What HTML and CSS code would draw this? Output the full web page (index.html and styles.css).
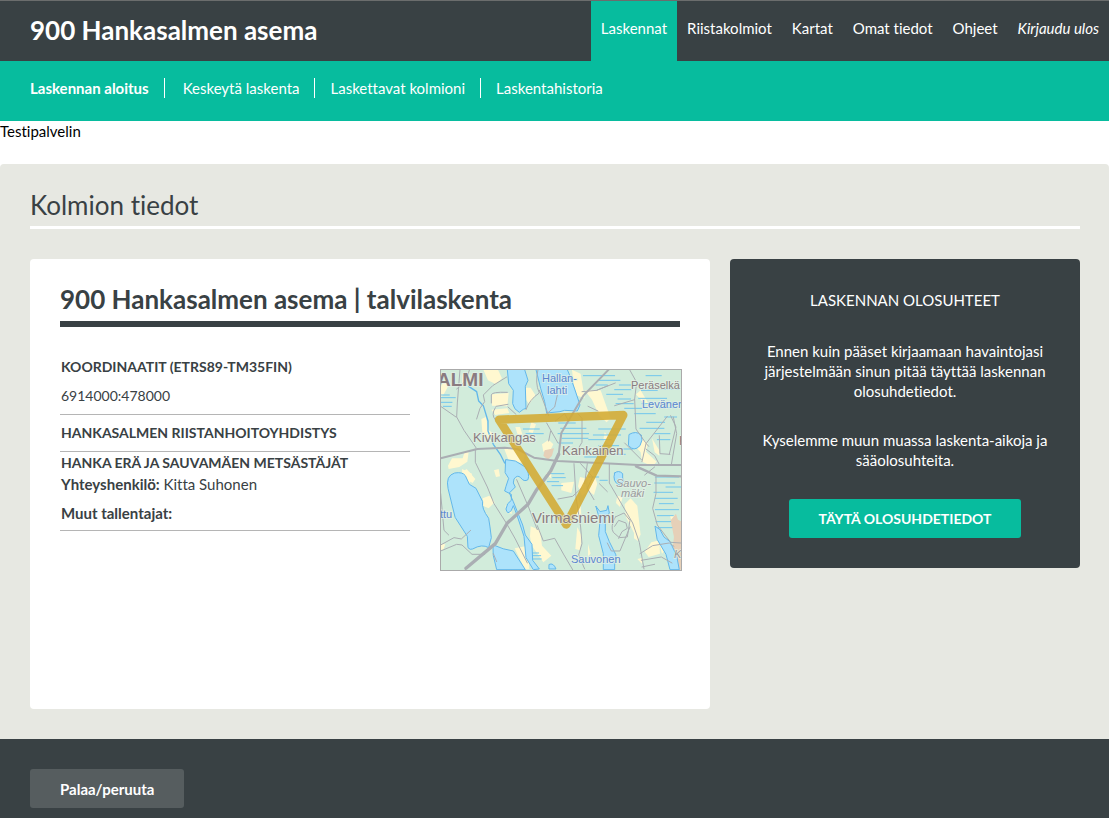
FILE: index.html
```html
<!DOCTYPE html>
<html lang="fi">
<head>
<meta charset="utf-8">
<meta name="viewport" content="width=device-width, initial-scale=1">
<title>Kolmion tiedot</title>
<link rel="stylesheet" href="styles.css">
</head>
<body>
<header class="topbar">
  <h1 class="site-title">900 Hankasalmen asema</h1>
  <nav class="main-nav" aria-label="Päävalikko">
    <a class="active" href="#">Laskennat</a>
    <a href="#">Riistakolmiot</a>
    <a href="#">Kartat</a>
    <a href="#">Omat tiedot</a>
    <a href="#">Ohjeet</a>
    <a class="logout" href="#">Kirjaudu ulos</a>
  </nav>
</header>
<nav class="sub-nav" aria-label="Laskennat">
  <a class="current" href="#">Laskennan aloitus</a>
  <a href="#">Keskeytä laskenta</a>
  <a href="#">Laskettavat kolmioni</a>
  <a href="#">Laskentahistoria</a>
</nav>
<p class="notice">Testipalvelin</p>
<main class="content">
  <h2 class="page-title">Kolmion tiedot</h2>
  <div class="columns">
    <section class="card">
      <h3 class="card-title">900 Hankasalmen asema | talvilaskenta</h3>
      <div class="card-body">
        <div class="info">
          <div class="info-row coordinates">
            <h4>KOORDINAATIT (ETRS89-TM35FIN)</h4>
            <p>6914000:478000</p>
          </div>
          <div class="info-row association">
            <h4>HANKASALMEN RIISTANHOITOYHDISTYS</h4>
          </div>
          <div class="info-row club">
            <h4>HANKA ERÄ JA SAUVAMÄEN METSÄSTÄJÄT</h4>
            <p><strong>Yhteyshenkilö:</strong> Kitta Suhonen</p>
            <p class="recorders"><strong>Muut tallentajat:</strong></p>
          </div>
        </div>
        <svg class="map" viewBox="0 0 242 202" role="img" aria-label="Kartta laskentakolmiosta">
          <rect width="242" height="202" fill="#d2ecdb"/>
          <g transform="scale(.3333) translate(-6 -6)" fill="none" stroke-linecap="round" stroke-linejoin="round">
            <g fill="#fff8d0">
              <path d="M136 8h44l12 26-18 18-24-12zM162 82l50-4-4 40-46-2zM160 128l48-4 6 14-42 6zM262 62l16 0 14 22-18 28-10-14zM240 94l22 4-2 22-16-2zM74 20l22 6-24 34zM8 52l16-12 10 12-18 32-8 6z"/>
              <path d="M30 296l12-22 32 0 6-20 12 2-4 28-24 16-32 6zM74 314l12-8 26 30-8 12-26-14zM168 310l14-4 4 22-12 2zM312 232l20-14 14 14-8 16-22 6zM198 244l34-6 30 22-8 28-42-8zM130 156l14-6 8 40 22 14-10 22-30-16zM280 166l14 6-10 26-12-4zM232 180l14 0 8 24-16-4z"/>
              <path d="M402 8l26 12 12 74-22-8-10-28zM440 70l48 0 30 84-12 12-22-20-22-48zM500 196l24 24-8 14-20-16zM590 236l22-22 18 16-6 24 32 30-12 14-32-14-4-28zM594 82l14-12 26 44-14-2zM642 214l22 36 0 16-14-10zM426 330l16 4 4 42-14 10-12-28zM446 330l18-20 14 40-10 34-14-10z"/>
              <path d="M72 306l30 14-6 28-22-16zM134 394l20-8 16 20-18 18-18-8zM202 416l12-6 8 30-14-2zM278 478l28 12 6 46 28 30-24 20-36-52-4-26zM230 544l40-8 4 70h-14zM8 530l14 2-6 16H8zM324 320l20-14-6 28zM370 348l38-4-8 34-30-8z"/>
              <path d="M418 380l10 36 2 28-8 20-8-30zM418 480l14 28-6 42-14-4zM450 530l8 30-8 8zM560 412l18-18 20 22 10 88-12 10-32-64zM588 496l20 4-8 22-12-8zM620 554l20-28 24-6 2 40-34 10zM664 530l14-8 10 22-16 16zM696 446l20 0 0 18-16-4zM538 386l16 4-8 30-12-12zM598 576l16-4-2 18z"/>
            </g>
            <path fill="#e6d0b8" d="M320 250l28-6-6 22-12 12-14-12zM698 460l16-20 6 18 12 6v144h-10l-18-66 4-32z"/>
            <path stroke="#70c6ee" stroke-width="3" d="M10 92h42M8 106h34M16 118h24M10 84h24M436 26h94M484 40h62M474 54h34M544 54h34M530 68h50M506 82h48M540 96h38M560 124h52M534 110h52M624 26h46M610 70h48M670 66h54M602 94h84M612 110h36M680 108h36M664 122h50M590 140h62M680 150h36M626 166h54M606 184h72M650 200h46M658 218h38M362 168h50M368 184h76M360 200h92M372 214h78M362 228h42M482 186h80M466 204h82M452 218h68M482 236h60M440 270h60M544 246h40M516 262h46M256 186h48M264 200h52M334 320h44M344 332h38M328 344h34M342 356h32M652 330h70M650 348h60M684 360h44M648 376h56M652 394h66M664 410h42M652 428h70M658 446h48M654 464h44M660 482h42M486 340h22M452 330h30M278 566h30M286 576h24M282 558h20"/>
            <g fill="#ade3fb" stroke="#62b7ea" stroke-width="3">
              <path d="M208 8l4 42 14 20-2 40q4 18 20 26 14-12 20-12l-2-66 8-18-10-32zM294 8l14 56 12 40 6 34 40-4 14-4 38 2 8-18-16-48-12-34-10-24zM574 202q20-12 36 2 6 14-4 32-18 20-34 0z"/>
              <path d="M30 364q-8-38 20-46 24-4 32 8l12 26 20 12 20 40q-4 20 18 50l4 26 4 32-8 30q-20-12-48 4-8 4-14-4l-2-34-36-56zM166 534q30 14 60 18l36 56h-86l-10-42z"/>
              <path d="M204 278l28 4 30 18q14 20 8 38-12 8-22-6-10-10-20 4-6 12 4 24l-18 18 12 26 12 30 16 40 8 30 20 28 2 48 20 26-18 2-22-36-6-64-22-66-10-26-6 14q-12 16-16-4 2-18 16-26l0-18-20-10 4-14 8-24-10-16z"/>
              <path d="M474 418l12 16 20-4 4-14 4 22-12 16 0 40 12 30 20 40-4 30 0 14h-34l0-48-14-54 4-44zM530 318q12-10 24 2-2 16 4 22l-14 12q-22-10-14-36zM652 478l14 10 12 22 18 14 20 42 8 42h-28l-12-46-26-44zM334 592q12-6 20 14h-20z"/>
              <path fill="none" stroke-width="4" d="M92 58l24 16 6 28 14 14 14 46 0 30 16 40 22 32 12 24"/>
            </g>
            <g stroke="#aaaeb3" stroke-width="3">
              <path d="M66 8l-8 100-2 42 22 40 36 52M8 118l46 32M56 66q30-20 38-56M116 156l10-32 14-20-4-20 28-28 42-26M160 108V84q0-10 48-8M172 122q-14 22 0 36M174 118l36-6M210 120l24 22M300 8q-10 40 4 70-30 20-40 50M304 70l28 76M322 144l28-24 8-36M326 168l34 60M338 192l-6 30"/>
              <path d="M432 74l44-4 56-22M476 70l34-14M576 10l20 36-6 50 4 90 28 40 10 12M530 116l60-18M352 162l28-22 12 22M420 140l12 14 0 72-12 20M450 118l30 14M560 228l50 50M688 148l-64 82-12 54M698 146l16 34-20 82M664 206l2 54 30 2M706 150l10 50-16 94M624 246l26 20 16 30"/>
              <path d="M112 246l0 40 36 74 20 50 38 60 26 46 36 72M8 534l40-22 22 4 28-26M8 552l48-20 16 2 30 28 38 0M8 380l10 110 14 14M166 560l10 24M236 338l34 78 28 72M408 290l6 100 14 90 4 50-10 34 18 42M360 396l44-8 26-24M428 290l36 40-16 34 20 34M448 290l-8 60M514 292l0 56 70 120 20 58 14 80"/>
              <path d="M298 476l18 46 34-8 28 50 26 44M654 330l0 50-10 44 14 50 40 52 30 2M532 450l26-12 18 22-8 50-24 2-18-16q-10-16 6-46M530 478l12-18 22 8 4 16-16 10-10 20M576 480l-30 72-26 0-12-24M606 560l38-24 50-8 14 10M610 580l60-10 32 18M612 600l38-8M484 350l24 24M650 300l-30 24"/>
              <path stroke-width="6" d="M512 8l-76 78-50 84-16 28-8 66"/>
              <path stroke-width="6" d="M8 274l110-28 82-4 38 4 50 26 70 10 170 8 72 4 130 0"/>
              <path stroke-width="7" d="M594 298l62 28 74 2"/>
              <path stroke-width="10" d="M362 262l-24 50-42 56-26 44-62 56-36 62-88 74"/>
            </g>
            <path d="M183 158L556 144L385 473Z" stroke="#d3aa32" stroke-opacity=".88" stroke-width="25"/>
          </g>
          <g class="map-places">
            <text class="town" x="-3" y="17">ALMI</text>
            <text x="33" y="73">Kivikangas</text>
            <text x="122" y="86">Kankainen</text>
            <text class="village" x="92" y="154">Virmasniemi</text>
            <text class="small" x="191" y="20">Peräselkä</text>
            <text x="239" y="76">K</text>
            <text class="hill" x="176" y="118">Sauvo-</text>
            <text class="hill" x="181" y="128">mäki</text>
            <text class="hill" x="234" y="189">K</text>
          </g>
          <g class="map-waters">
            <text x="102" y="13">Hallan-</text>
            <text x="107" y="25">lahti</text>
            <text x="202" y="39">Levänen</text>
            <text x="131" y="194">Sauvonen</text>
            <text x="0" y="149">ttu</text>
          </g>
          <rect x="0" y="0" width="242" height="202" fill="none" stroke="#aaaaaa" stroke-width="2"/>
        </svg>
      </div>
    </section>
    <aside class="conditions">
      <h3>LASKENNAN OLOSUHTEET</h3>
      <p>Ennen kuin pääset kirjaamaan havaintojasi järjestelmään sinun pitää täyttää laskennan olosuhdetiedot.</p>
      <p>Kyselemme muun muassa laskenta-aikoja ja sääolosuhteita.</p>
      <button class="button primary" type="button">TÄYTÄ OLOSUHDETIEDOT</button>
    </aside>
  </div>
</main>
<footer class="footer">
  <button class="button secondary" type="button">Palaa/peruuta</button>
</footer>
</body>
</html>
```

FILE: styles.css
```css
* { box-sizing: border-box; }

body {
  margin: 0;
  min-height: 100vh;
  display: flex;
  flex-direction: column;
  background: #fff;
  color: #394144;
  font-family: Lato, "Liberation Sans", sans-serif;
  font-size: 15px;
  font-variant-ligatures: none;
  line-height: 20px;
}

h1, h2, h3, h4, p { margin: 0; }
a { color: inherit; text-decoration: none; }

.topbar {
  display: flex;
  justify-content: space-between;
  min-height: 61px;
  border-top: 1px solid #6b6d6d;
  background: #394144;
  color: #fff;
}

.site-title {
  padding: 13px 30px;
  font-size: 26px;
  line-height: 32px;
}

.main-nav { display: flex; }
.main-nav a { padding: 17px 10px 23px; }
.main-nav .active { background: #07bc9e; }
.main-nav .logout { font-style: italic; }

.sub-nav {
  display: flex;
  min-height: 60px;
  padding: 17px 30px 23px;
  background: #07bc9e;
  color: #fff;
}

.sub-nav a { padding: 0 15px; border-left: 1px solid #fff; }
.sub-nav a:first-child { padding-left: 0; border-left: 0; }
.sub-nav .current { font-weight: bold; }
.sub-nav .current + a { padding-left: 18px; }

.notice { padding-bottom: 23px; color: #000; }

.content {
  flex: 1;
  padding: 23px 29px 30px 30px;
  border-radius: 4px 4px 0 0;
  background: #e7e8e2;
}

.page-title {
  padding-bottom: 3px;
  border-bottom: 3px solid #fff;
  font-size: 26px;
  font-weight: normal;
  line-height: 36px;
}

.columns {
  display: grid;
  grid-template-columns: 68fr 35fr;
  align-items: start;
  gap: 20px;
  margin-top: 30px;
}

.card {
  min-height: 450px;
  padding: 23px 28px 30px 30px;
  border-radius: 4px;
  background: #fff;
}

.card-title {
  margin-right: 2px;
  padding-bottom: 5px;
  border-bottom: 6px solid #394144;
  font-size: 26px;
  line-height: 34px;
}

.card-body {
  display: grid;
  grid-template-columns: minmax(0, 350px) 242px;
  align-items: start;
  gap: 30px;
  padding-top: 30px;
}

.info h4 { font-size: 14px; }
.info-row { padding: 0 1px; border-bottom: 1px solid #b5b5b5; }
.coordinates { padding-bottom: 8px; }
.coordinates p { margin-top: 9px; font-size: 14px; }
.association { padding-top: 8px; padding-bottom: 8px; }
.club { padding-top: 1px; padding-bottom: 7px; }
.club p { margin-top: 1px; }
.club .recorders { margin-top: 9px; }

.map {
  width: 242px;
  height: 202px;
  margin-top: 12px;
  font-family: "Liberation Sans", sans-serif;
}

.map text { paint-order: stroke; stroke: #e5f0e6; stroke-width: 2px; stroke-opacity: 0.7; }
.map-places { fill: #8a7c80; font-size: 13px; }
.map-places .town { font-size: 19px; font-weight: bold; }
.map-places .village { font-size: 15px; }
.map-places .small { font-size: 11px; }
.map-places .hill { fill: #9b9b9e; font-size: 11px; font-style: italic; }
.map-waters { fill: #5a86d0; font-size: 11px; }

.conditions {
  display: flex;
  flex-direction: column;
  align-items: center;
  padding: 31px 30px 30px;
  border-radius: 4px;
  background: #394144;
  color: #fff;
  text-align: center;
}

.conditions h3 {
  margin-bottom: 31px;
  font-size: 15px;
  font-weight: normal;
}

.conditions p { margin-bottom: 29px; }

.button {
  padding: 10px 30px 9px;
  border: 0;
  border-radius: 3px;
  color: #fff;
  font: inherit;
  font-weight: bold;
  cursor: pointer;
}

.primary { background: #07bc9e; font-size: 14px; }
.secondary { background: #565d5f; }

.footer {
  min-height: 79px;
  padding: 30px 30px 10px;
  background: #394144;
}
```
